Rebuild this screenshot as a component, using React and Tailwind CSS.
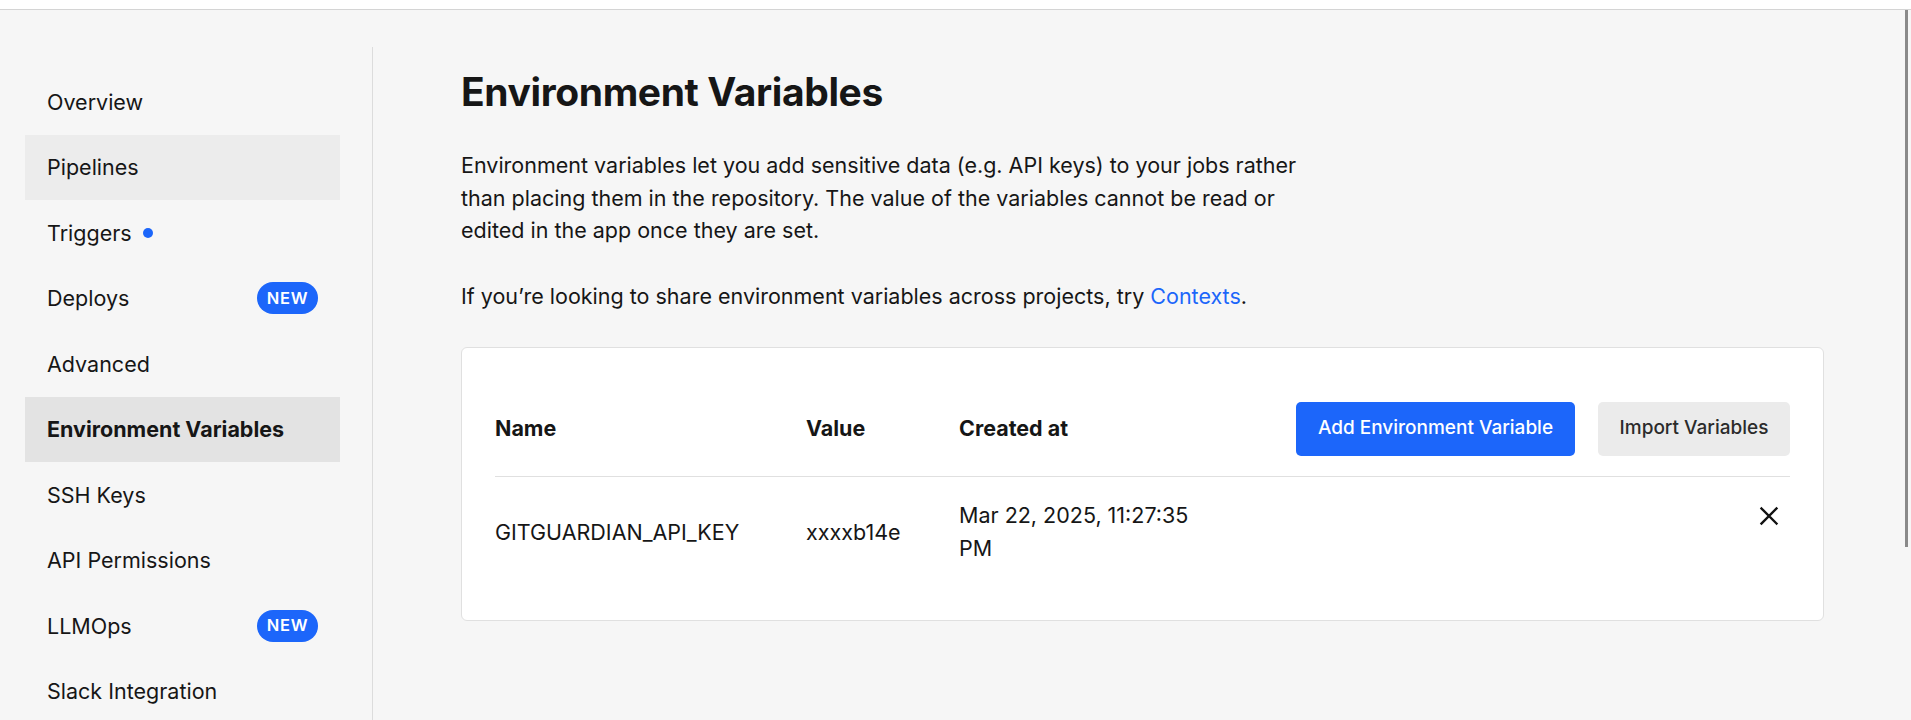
const NAV_ITEMS = [
  { label: 'Overview' },
  { label: 'Pipelines', hover: true },
  { label: 'Triggers', dot: true },
  { label: 'Deploys', badge: true },
  { label: 'Advanced' },
  { label: 'Environment Variables', active: true },
  { label: 'SSH Keys' },
  { label: 'API Permissions' },
  { label: 'LLMOps', badge: true },
  { label: 'Slack Integration' },
];

function NavItem({ item }) {
  const bg = item.active ? 'bg-[#e3e3e3] font-bold' : item.hover ? 'bg-[#ececec]' : '';
  return (
    <div className={`flex h-[65.5px] w-[315px] items-center justify-between pl-[22px] pr-[22px] ${bg}`}>
      <span className="flex items-center gap-[11px]">
        {item.label}
        {item.dot ? <span className="h-[10px] w-[10px] rounded-full bg-[#1c66fa]" /> : null}
      </span>
      {item.badge ? (
        <span className="flex h-[32px] w-[61px] items-center justify-center rounded-full bg-[#1c66fa] text-[16.5px] font-semibold tracking-[0.04em] text-white">
          NEW
        </span>
      ) : null}
    </div>
  );
}

function CloseIcon() {
  return (
    <svg width="20" height="20" viewBox="0 0 20 20" fill="none" stroke="#111" strokeWidth="2.4" strokeLinecap="square">
      <path d="M2.5 2.5 L17.5 17.5 M17.5 2.5 L2.5 17.5" />
    </svg>
  );
}

export default function App() {
  return (
    <div className="flex h-[720px] w-full flex-col overflow-hidden bg-[#f6f6f6] text-[21.5px] text-[#161616] [font-family:Inter,'Noto_Sans',sans-serif]">
      <div className="h-[10px] shrink-0 border-b border-[#d4d4d4] bg-white" />
      <div className="flex min-h-0 flex-1">
        <aside className="mt-[37px] w-[373px] shrink-0 border-r border-[#dcdcdc] pl-[25px] pt-[22px]">
          {NAV_ITEMS.map((item) => (
            <NavItem key={item.label} item={item} />
          ))}
        </aside>

        <main className="min-w-0 flex-1 pl-[88px] pr-[81px] pt-[58px]">
          <h1 className="text-[39px] font-bold leading-[48px] tracking-[-0.01em]">Environment Variables</h1>
          <p className="mt-[33px] w-[860px] leading-[32.5px]">
            Environment variables let you add sensitive data (e.g. API keys) to your jobs rather than placing them in the
            repository. The value of the variables cannot be read or edited in the app once they are set.
          </p>
          <p className="mt-[33px] leading-[32.5px]">
            If you’re looking to share environment variables across projects, try{' '}
            <span className="text-[#1c66fa]">Contexts</span>.
          </p>

          <div className="mt-[35px] rounded-[6px] border border-[#e0e0e0] bg-white px-[33px] pb-[33px] pt-[33px]">
            <div className="grid h-[96px] grid-cols-[311px_153px_250px_1fr] items-center border-b border-[#e0e0e0] font-bold">
              <span>Name</span>
              <span>Value</span>
              <span>Created at</span>
              <div className="flex justify-end gap-[23px] font-medium">
                <button className="h-[54px] w-[279px] rounded-[5px] bg-[#1c66fa] text-[19px] text-white" type="button">
                  Add Environment Variable
                </button>
                <button className="h-[54px] w-[192px] rounded-[5px] bg-[#ebebeb] text-[19px] text-[#2b2b2b]" type="button">
                  Import Variables
                </button>
              </div>
            </div>
            <div className="grid grid-cols-[311px_153px_250px_1fr] items-center py-[22px] leading-[33px]">
              <span>GITGUARDIAN_API_KEY</span>
              <span>xxxxb14e</span>
              <span>Mar 22, 2025, 11:27:35 PM</span>
              <div className="flex h-[33px] items-center justify-end self-start pr-[11px]">
                <CloseIcon />
              </div>
            </div>
          </div>
        </main>

        <div className="flex w-[6px] shrink-0">
          <div className="h-[537px] w-[3px] bg-[#8a8a8a]" />
        </div>
      </div>
    </div>
  );
}
